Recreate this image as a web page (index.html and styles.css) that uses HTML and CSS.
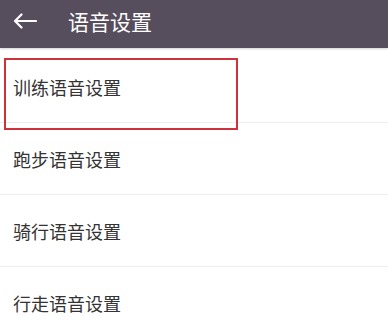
FILE: index.html
```html
<!DOCTYPE html>
<html lang="zh">
<head>
<meta charset="utf-8">
<link rel="stylesheet" href="styles.css">
</head>
<body>
<header class="topbar">
  <svg class="back" width="24" height="16" viewBox="0 0 24 16" aria-hidden="true">
    <path d="M23 8H2M8.5 1.5L2 8l6.5 6.5" fill="none" stroke="#fff" stroke-width="2.2" stroke-linecap="round" stroke-linejoin="round"/>
  </svg>
  <span class="title">语音设置</span>
</header>
<ul class="list">
  <li class="item"><span class="hl">训练语音设置</span></li>
  <li class="item">跑步语音设置</li>
  <li class="item">骑行语音设置</li>
  <li class="item">行走语音设置</li>
</ul>
</body>
</html>
```
FILE: styles.css
```css
html, body {
  margin: 0;
  padding: 0;
  background: #ffffff;
  font-family: "Noto Sans CJK SC", "Noto Sans", sans-serif;
}
.topbar {
  height: 48px;
  background: #574e5d;
  display: flex;
  align-items: center;
  padding-left: 13px;
  box-shadow: 0 1px 2px rgba(0,0,0,0.18);
  position: relative;
  z-index: 1;
}
.back {
  display: block;
  margin-top: -7px;
}
.title {
  color: #ffffff;
  font-size: 21px;
  margin-left: 31px;
  margin-top: -7px;
}
.list {
  list-style: none;
  margin: 0;
  padding: 0;
  margin-top: 3px;
}
.item {
  height: 71px;
  display: flex;
  align-items: center;
  padding-left: 13px;
  font-size: 18px;
  color: #333333;
  border-bottom: 1px solid #eeeeee;
  position: relative;
}
.hl::after {
  content: "";
  position: absolute;
  left: 4px;
  top: 7px;
  width: 230px;
  height: 68px;
  border: 2px solid #d0323c;
}
```
